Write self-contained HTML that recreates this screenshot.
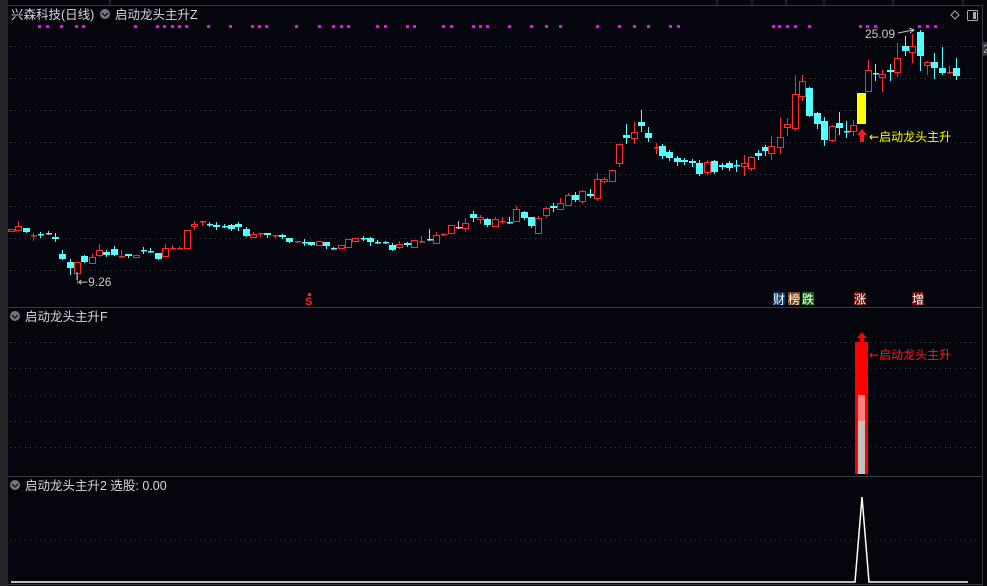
<!DOCTYPE html>
<html><head><meta charset="utf-8">
<style>
html,body{margin:0;padding:0;background:#05050d;overflow:hidden}
svg{display:block}
text{font-family:"Liberation Sans","Noto Sans CJK SC",sans-serif}
.ar{font-family:"DejaVu Sans",sans-serif}
</style></head>
<body>
<svg id="s" width="987" height="586" viewBox="0 0 987 586" xmlns="http://www.w3.org/2000/svg">
<rect width="987" height="586" fill="#05050d"/>
<rect x="0" y="0" width="8" height="586" fill="#232328"/>
<line x1="8" y1="5.5" x2="982" y2="5.5" stroke="#3a3a3e"/>
<g stroke="#3a3a3e"><line x1="110" y1="0" x2="110" y2="5"/><line x1="717" y1="0" x2="717" y2="5"/><line x1="752" y1="0" x2="752" y2="5"/><line x1="786" y1="0" x2="786" y2="5"/><line x1="824" y1="0" x2="824" y2="5"/><line x1="893" y1="0" x2="893" y2="5"/><line x1="963" y1="0" x2="963" y2="5"/></g>
<line x1="982.5" y1="5" x2="982.5" y2="586" stroke="#3a3a3e"/>
<rect x="983" y="42" width="4" height="14" fill="#333"/>
<text x="983" y="53" fill="#aaa" font-size="12">2</text>
<g id="grid" stroke="#3a3a40" stroke-dasharray="1,4"></g>
<line x1="8" y1="307.5" x2="982" y2="307.5" stroke="#3a3a3e"/>
<line x1="8" y1="476.5" x2="982" y2="476.5" stroke="#3a3a3e"/>
<line x1="8" y1="584.5" x2="982" y2="584.5" stroke="#3a3a3e"/>
<text x="11" y="19" fill="#d8d8d8" font-size="12.5">兴森科技(日线)</text>
<circle cx="105" cy="14" r="5" fill="#777"/><path d="M102 13 L105 16 L108 13" stroke="#111" stroke-width="1.3" fill="none"/>
<text x="115" y="19" fill="#d8d8d8" font-size="12.5">启动龙头主升Z</text>
<path d="M955 11 L959 15 L955 19 L951 15 Z" stroke="#aaa" fill="none"/>
<rect x="967.5" y="10.5" width="10" height="10" rx="1" stroke="#aaa" fill="none"/><rect x="973" y="12" width="3" height="7" fill="#aaa"/>
<g id="dots" fill="#ff00ff"></g>
<g id="candles"></g>
<rect x="857" y="93" width="9" height="31" fill="#ffff00"/>
<path d="M862 129 L857 135 L860 135 L860 142 L864 142 L864 135 L867 135 Z" fill="#ff1a1a"/>
<text x="869" y="141" fill="#ffff00" font-size="12"><tspan class="ar">←</tspan>启动龙头主升</text>
<text x="865" y="38" fill="#c8c8c8" font-size="12">25.09</text>
<path d="M898 33 L913 30 M909 28 L914 30 L910 33" stroke="#c8c8c8" fill="none"/>
<text x="78" y="286" fill="#c8c8c8" font-size="12"><tspan class="ar">←</tspan>9.26</text>
<line x1="77" y1="272" x2="77" y2="280" stroke="#c8c8c8"/>
<text x="305" y="305" fill="#ff2020" font-size="11" font-weight="bold">S</text>
<rect x="308" y="293" width="3" height="3" fill="#ff2020"/>
<rect x="773" y="292" width="12" height="13" fill="#0a3a6a"/><text x="773" y="303.5" fill="#fff" font-size="12">财</text>
<rect x="788" y="292" width="12" height="13" fill="#7a4410"/><text x="788" y="303.5" fill="#fff" font-size="12">榜</text>
<rect x="802" y="292" width="12" height="13" fill="#0f6a0f"/><text x="802" y="303.5" fill="#fff" font-size="12">跌</text>
<rect x="854" y="292" width="12" height="13" fill="#6a0a0a"/><text x="854" y="303.5" fill="#fff" font-size="12">涨</text>
<rect x="912" y="292" width="12" height="13" fill="#6a0a0a"/><text x="912" y="303.5" fill="#fff" font-size="12">增</text>
<circle cx="15" cy="316" r="5" fill="#777"/><path d="M12 315 L15 318 L18 315" stroke="#111" stroke-width="1.3" fill="none"/>
<text x="25" y="321" fill="#d8d8d8" font-size="12.5">启动龙头主升F</text>
<rect x="855" y="342" width="13" height="132" fill="#ff0000"/>
<rect x="858" y="395" width="7" height="26" fill="#ff8080"/>
<rect x="858" y="421" width="7" height="53" fill="#c0c0c0"/>
<path d="M862 332 L857 338 L860 338 L860 342 L864 342 L864 338 L867 338 Z" fill="#ff0000"/>
<text x="869" y="359" fill="#ff1a1a" font-size="12"><tspan class="ar">←</tspan>启动龙头主升</text>
<circle cx="15" cy="485" r="5" fill="#777"/><path d="M12 484 L15 487 L18 484" stroke="#111" stroke-width="1.3" fill="none"/>
<text x="25" y="490" fill="#d8d8d8" font-size="12.5">启动龙头主升2  选股: 0.00</text>
<path d="M11 582 L855 582 L862 497 L869 582 L968 582" stroke="#fff" stroke-width="1.5" fill="none"/>
</svg>
<script>
var NS="http://www.w3.org/2000/svg";
function el(p,t,a){var e=document.createElementNS(NS,t);for(var k in a)e.setAttribute(k,a[k]);document.getElementById(p).appendChild(e);}
[46,78,110,142,174,206,238,270,342,368,395,421,447,540].forEach(function(y){el("grid","line",{x1:10,y1:y+.5,x2:980,y2:y+.5});});
[38,46,60,75,82,134,156,163,171,178,185,207,229,251,258,265,295,318,332,340,347,376,384,406,413,442,450,472,479,486,508,530,545,559,596,618,633,647,669,677,772,778,786,794,808,859,866,874,918,926,934].forEach(function(x){el("dots","rect",{x:x,y:25,width:3,height:3});});
var d=[
[11,229,231,229,231,'r'],[18,226,230,221,230,'r'],[26,228,232,228,232,'c'],[33,235,235,233,240,'r'],[40,234,234,232,237,'c'],[48,233,233,231,234,'g'],[55,237,239,233,241,'c'],
[62,254,259,250,259,'c'],[70,262,268,259,274,'c'],[77,262,273,262,283,'r'],[84,256,262,255,262,'c'],[92,257,263,254,263,'r'],[99,250,255,244,256,'r'],[106,252,255,250,256,'c'],[114,249,255,246,255,'c'],[121,256,256,250,257,'r'],[128,254,256,254,257,'c'],[136,255,257,255,257,'r'],
[143,250,250,247,253,'c'],[150,251,251,248,252,'c'],[158,253,259,253,259,'c'],[165,248,256,244,256,'r'],[172,248,248,245,248,'r'],[179,248,248,246,248,'r'],[187,230,248,230,248,'r'],[194,224,226,221,229,'r'],[202,221,222,221,225,'r'],[209,224,224,222,226,'c'],[216,225,227,222,229,'c'],[224,226,226,224,227,'c'],[231,225,229,224,230,'c'],[238,224,227,222,230,'c'],[246,229,236,227,236,'c'],[253,234,237,232,237,'r'],[260,233,234,233,236,'r'],[267,233,235,233,237,'c'],[275,235,235,235,237,'r'],[282,235,237,234,238,'c'],[289,238,242,238,242,'c'],[297,241,242,241,242,'r'],[304,242,242,239,245,'c'],[311,242,245,242,245,'c'],[319,241,245,241,245,'r'],[326,242,246,242,248,'c'],
[333,248,248,247,249,'c'],[341,245,248,245,248,'r'],[348,239,247,239,247,'r'],[355,238,241,238,241,'r'],[363,238,238,236,240,'c'],[370,238,242,237,245,'c'],[377,242,242,240,243,'c'],[385,242,242,241,243,'c'],[392,245,250,243,250,'c'],[399,244,247,241,248,'r'],[407,243,245,242,246,'c'],[414,240,247,240,247,'r'],[421,241,241,236,242,'r'],[429,239,239,229,240,'c'],[436,235,243,232,243,'r'],[443,234,235,233,235,'r'],[451,225,233,225,233,'r'],[458,227,227,221,228,'g'],[465,223,228,218,231,'r'],[473,214,218,211,221,'c'],[480,217,219,215,223,'r'],[487,219,225,218,226,'c'],[495,219,226,217,226,'r'],[502,221,221,217,223,'r'],[509,222,222,217,223,'c'],[516,209,221,206,221,'r'],[524,212,218,211,219,'c'],[531,217,226,217,227,'c'],[538,218,233,216,233,'r'],[546,208,215,207,217,'r'],[553,206,208,203,211,'c'],[560,203,209,198,209,'r'],[568,195,205,193,205,'r'],[575,195,200,192,201,'c'],[582,191,201,190,203,'r'],[590,194,196,189,197,'c'],[597,179,198,173,200,'r'],[604,179,181,177,182,'r'],[612,170,181,170,181,'r'],[619,144,163,144,166,'r'],[626,135,138,124,143,'c'],[634,132,138,122,143,'r'],[641,122,126,110,131,'c'],[648,133,138,127,141,'c'],[656,147,147,143,153,'r'],
[662,146,156,144,158,'c'],[669,152,158,150,160,'c'],[677,158,162,156,165,'c'],[684,160,162,158,164,'c'],[692,161,163,159,166,'c'],[699,163,174,160,175,'c'],[707,162,172,160,174,'r'],[714,161,172,160,173,'c'],[722,165,167,163,169,'c'],[729,163,168,161,170,'c'],[736,165,166,160,171,'c'],[744,163,166,155,175,'r'],[751,157,168,156,170,'r'],[758,153,156,150,159,'c'],
[765,147,151,145,155,'c'],[771,146,153,136,159,'r'],[780,137,147,118,153,'r'],[787,124,127,118,135,'r'],[795,94,128,75,130,'r'],[802,81,96,75,100,'r'],[809,88,116,87,116,'c'],[817,113,124,112,128,'c'],[824,121,140,117,145,'c'],[832,126,140,125,141,'r'],[839,123,128,112,134,'c'],[846,131,131,121,137,'c'],[853,125,131,120,135,'r'],
[868,70,91,60,91,'r'],[875,73,74,64,80,'c'],[882,74,77,70,91,'r'],[890,70,72,64,80,'c'],[897,58,72,43,76,'r'],[905,46,51,36,55,'c'],[912,46,52,34,62,'r'],[920,32,56,30,70,'c'],[927,62,65,61,74,'r'],[934,62,68,53,78,'c'],[942,68,73,47,74,'c'],[949,72,73,66,73,'r'],[956,68,76,58,79,'c']];
d.forEach(function(c){var col=c[5]=='r'?'#ff2a2a':c[5]=='c'?'#54ffff':'#c8c8c8';var x=c[0];
el("candles","line",{x1:x+.5,y1:c[3],x2:x+.5,y2:c[4]+1,stroke:col});
var h=c[2]-c[1];
if(h<2){el("candles","rect",{x:x-2,y:c[1],width:6,height:1.5,fill:col});}
else if(c[5]=='r'){el("candles","rect",{x:x-2.5,y:c[1]+.5,width:6,height:h,fill:'#05050d',stroke:col});}
else el("candles","rect",{x:x-3,y:c[1],width:7,height:h,fill:col});});
</script>
</body></html>
